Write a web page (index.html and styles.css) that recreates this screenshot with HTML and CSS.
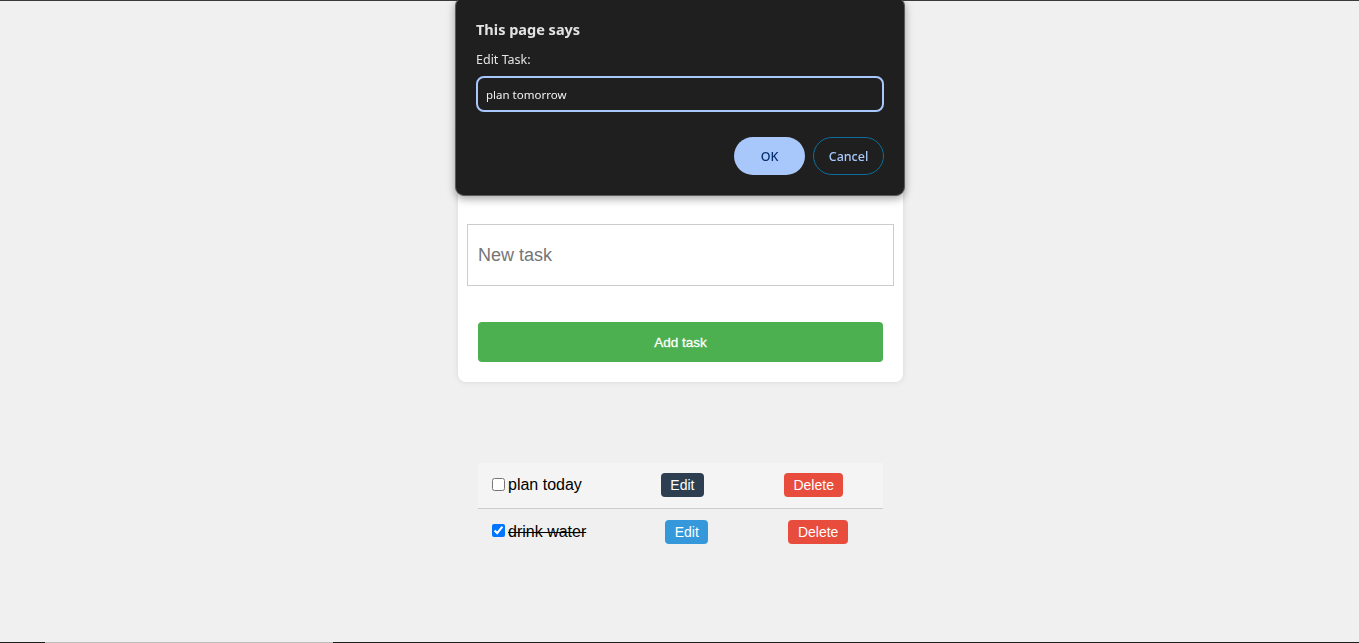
FILE: index.html
```html
<!DOCTYPE html>
<html lang="en">
<head>
<meta charset="utf-8">
<title>To-Do List</title>
<link rel="stylesheet" href="styles.css">
</head>
<body>
<div class="page">
  <div class="card">
    <h1 class="card-title">To-Do List</h1>
    <input class="task-input" type="text" placeholder="New task">
    <button class="add-btn">Add task</button>
  </div>
  <ul class="task-list">
    <li class="task-item task-item--hover">
      <label class="task-label"><input type="checkbox" class="task-check"><span class="task-text">plan today</span></label>
      <button class="btn btn-edit btn-edit--hover">Edit</button>
      <button class="btn btn-delete">Delete</button>
    </li>
    <li class="task-item">
      <label class="task-label"><input type="checkbox" class="task-check" checked><span class="task-text task-text--done">drink water</span></label>
      <button class="btn btn-edit">Edit</button>
      <button class="btn btn-delete">Delete</button>
    </li>
  </ul>
</div>

<div class="dialog">
  <div class="dialog-title">This page says</div>
  <div class="dialog-msg">Edit Task:</div>
  <div class="dialog-field">plan tomorrow</div>
  <div class="dialog-actions">
    <button class="dbtn dbtn-ok">OK</button>
    <button class="dbtn dbtn-cancel">Cancel</button>
  </div>
</div>
<div class="screen-edge"></div>
</body>
</html>
```
FILE: styles.css
```css
* { box-sizing: border-box; }
html, body { height: 100%; }
body {
  margin: 0;
  padding-left: 2px;
  background: #f0f0f0;
  font-family: "Liberation Sans", Arial, sans-serif;
  border-top: 1px solid #3a3a3a;
  overflow: hidden;
}
.page {
  width: 445px;
  margin: 119px auto 0;
}
.card {
  background: #fff;
  border-radius: 8px;
  box-shadow: 0 0 6px rgba(0,0,0,0.1);
  padding: 20px 9px 20px;
  display: flex;
  flex-direction: column;
}
.card-title {
  margin: 0 0 47px;
  font-size: 32px;
  line-height: 37px;
  text-align: center;
  color: #333;
}
.task-input {
  height: 62px;
  border: 1px solid #ccc;
  padding: 0 10px;
  font-family: "Liberation Sans", Arial, sans-serif;
  font-size: 18px;
  color: #333;
  outline: none;
}
.task-input::placeholder { color: #757575; }
.add-btn {
  margin: 36px 11px 0;
  height: 40px;
  background: #4caf50;
  color: #fff;
  border: none;
  border-radius: 4px;
  font-family: "Liberation Sans", Arial, sans-serif;
  font-size: 13.5px;
  font-weight: normal;
  -webkit-text-stroke: 0.3px #fff;
}
.task-list {
  list-style: none;
  margin: 81px 20px 0;
  padding: 0;
}
.task-item {
  display: flex;
  align-items: center;
  height: 46px;
  padding: 0 10px 1px;
  border-bottom: 1px solid #ccc;
}
.task-item:last-child { border-bottom: none; }
.task-item--hover { background: #f4f4f4; }
.task-label {
  display: flex;
  align-items: center;
  font-size: 16px;
  color: #000;
}
.task-check {
  margin: 0 3px 2px 4px;
  width: 13px;
  height: 13px;
}
.task-text--done { text-decoration: line-through; }
.btn {
  height: 24px;
  padding: 0 9.5px;
  border: none;
  border-radius: 4px;
  color: #fff;
  font-family: "Liberation Sans", Arial, sans-serif;
  font-size: 14px;
  margin-left: 80px;
}
.btn-edit { background: #3498db; margin-left: 79px; }
.btn-edit--hover { background: #2c3e50; }
.btn-delete { background: #e74c3c; }

.dialog {
  position: fixed;
  top: -3px;
  left: 455px;
  width: 450px;
  height: 199px;
  background: #1f1f1f;
  border: 1px solid #5a5a5a;
  border-radius: 9px;
  box-shadow: 0 3px 8px rgba(0,0,0,0.35);
  padding: 21px 20px 20px;
  font-family: "Noto Sans", "Open Sans", sans-serif;
  color: #e3e3e3;
}
.dialog-title {
  font-size: 14.5px;
  font-weight: bold;
  line-height: 20px;
}
.dialog-msg {
  margin-top: 13px;
  font-size: 12.5px;
  line-height: 16px;
}
.dialog-field {
  margin-top: 8px;
  height: 36px;
  border: 2px solid #a8c7fa;
  border-radius: 8px;
  padding: 0 8px;
  display: flex;
  align-items: center;
  font-size: 11.5px;
  color: #f2f2f2;
}
.dialog-actions {
  display: flex;
  justify-content: flex-end;
  gap: 8px;
  margin-top: 25px;
}
.dbtn {
  width: 71px;
  height: 38px;
  border-radius: 19px;
  font-family: "Noto Sans", "Open Sans", sans-serif;
  font-size: 12.5px;
  font-weight: 500;
}
.dbtn-ok {
  background: #a8c7fa;
  color: #062e6f;
  border: none;
}
.dbtn-cancel {
  background: transparent;
  color: #a8c7fa;
  border: 1px solid #0d6e9c;
}
.screen-edge {
  position: fixed;
  left: 0;
  right: 0;
  bottom: 0;
  height: 1px;
  background: linear-gradient(to right, #1e1e1e 0, #1e1e1e 45px, #bdbdbd 45px, #bdbdbd 333px, #1e1e1e 333px);
}
```
